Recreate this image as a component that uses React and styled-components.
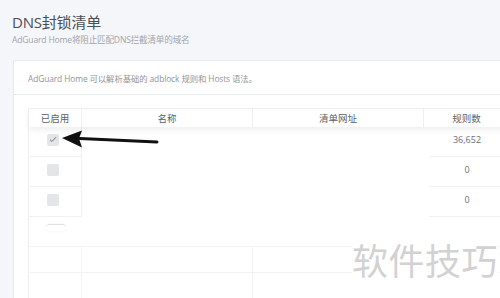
import React from "react";
import styled, { createGlobalStyle } from "styled-components";

const Global = createGlobalStyle`
  html, body { margin: 0; padding: 0; background: #f5f6fa; overflow: hidden; }
  body { font-family: "Open Sans", "Noto Sans CJK SC", sans-serif; width: 500px; height: 298px; }
`;

const Page = styled.div`
  position: relative;
  width: 500px;
  height: 298px;
  overflow: hidden;
  padding: 12px 0 0 12px;
  box-sizing: border-box;
`;

const Title = styled.h1`
  margin: 0;
  font-size: 15px;
  font-weight: 400;
  line-height: 20px;
  color: #4a4f57;
  letter-spacing: -0.2px;
`;

const Subtitle = styled.div`
  margin-top: 2px;
  font-size: 8.6px;
  line-height: 12px;
  color: #a0a5ab;
  letter-spacing: -0.2px;
`;

const Card = styled.div`
  margin-top: 14px;
  margin-left: 1px;
  width: 520px;
  background: #fff;
  border: 1px solid #e8eaef;
  border-right: none;
`;

const CardHeader = styled.div`
  height: 33px;
  display: flex;
  align-items: center;
  padding-left: 14px;
  font-size: 8.4px;
  color: #8f949a;
  border-bottom: 1px solid #e9ecef;
  letter-spacing: -0.1px;
`;

const CardBody = styled.div`
  padding: 13px 0 0 14px;
`;

const Table = styled.div`
  border-left: 1px solid #eef0f2;
  border-top: 1px solid #eef0f2;
`;

const cols = "53px 171px 171px 86px";

const HeadRow = styled.div`
  display: grid;
  grid-template-columns: ${cols};
  height: 18px;
  box-shadow: 0 3px 6px rgba(0, 0, 0, 0.07);
  position: relative;
  z-index: 1;
  background: #fff;
`;

const HeadCell = styled.div`
  display: flex;
  align-items: center;
  justify-content: center;
  font-size: 9.5px;
  color: #5a5f66;
  border-right: 1px solid #eef0f2;
`;

const Row = styled.div`
  display: grid;
  grid-template-columns: ${cols};
  height: 30px;
`;

const Cell = styled.div`
  display: flex;
  align-items: center;
  justify-content: center;
  font-size: 9px;
  color: #6a6f75;
  border-right: ${(p) => (p.$bordered ? "1px solid #f0f1f3" : "none")};
  border-bottom: ${(p) => (p.$lined ? "1px solid #f0f1f3" : "none")};
  box-sizing: border-box;
  margin-left: ${(p) => (p.$inset ? "5px" : "0")};
  padding-right: ${(p) => (p.$inset ? "5px" : "0")};
  padding-bottom: ${(p) => (p.$inset ? "4px" : "0")};
`;

const Box = styled.div`
  width: 12px;
  height: 12px;
  border-radius: 2px;
  background: #e4e5e7;
  display: flex;
  align-items: center;
  justify-content: center;
  margin: -4px 5px 0 0;
`;

const PadRow = styled.div`
  display: grid;
  grid-template-columns: 53px 171px 98px;
  height: ${(p) => p.$h}px;
  border-bottom: ${(p) => (p.$lined ? "1px solid #f2f3f5" : "none")};
  box-sizing: border-box;
`;

const PadCell = styled.div`
  border-right: ${(p) => (p.$bordered ? "1px solid #f2f3f5" : "none")};
  display: flex;
  justify-content: center;
`;

const Dash = styled.div`
  margin-top: 7px;
  width: 20px;
  height: 6px;
  border-radius: 4px;
  border-top: 1px solid #e0e0e0;
  box-shadow: 0 0 4px rgba(0, 0, 0, 0.04);
`;

const Arrow = styled.svg`
  position: absolute;
  left: 60px;
  top: 128px;
  width: 100px;
  height: 24px;
`;

const Watermark = styled.div`
  position: absolute;
  left: 352px;
  top: 235px;
  font-family: "Noto Sans CJK SC", sans-serif;
  font-size: 36px;
  color: #d2d2d2;
  letter-spacing: 0.5px;
  background: rgba(255, 255, 255, 0.9);
  line-height: 48px;
`;

const Check = () => (
  <svg width="8" height="7" viewBox="0 0 8 7">
    <path d="M1 3.6 L3 5.5 L7 1.2" fill="none" stroke="#6f737a" strokeWidth="1" />
  </svg>
);

const rows = [
  { on: true, rules: "36,652" },
  { on: false, rules: "0" },
  { on: false, rules: "0" },
];

export default function App() {
  return (
    <>
      <Global />
      <Page>
        <Title>DNS封锁清单</Title>
        <Subtitle>AdGuard Home将阻止匹配DNS拦截清单的域名</Subtitle>
        <Card>
          <CardHeader>AdGuard Home 可以解析基础的 adblock 规则和 Hosts 语法。</CardHeader>
          <CardBody>
            <Table>
              <HeadRow>
                <HeadCell>已启用</HeadCell>
                <HeadCell>名称</HeadCell>
                <HeadCell>清单网址</HeadCell>
                <HeadCell>规则数</HeadCell>
              </HeadRow>
              {rows.map((r, i) => (
                <Row key={i}>
                  <Cell $bordered $lined>
                    <Box>{r.on && <Check />}</Box>
                  </Cell>
                  <Cell />
                  <Cell />
                  <Cell $lined $inset>{r.rules}</Cell>
                </Row>
              ))}
              <PadRow $h={30} $lined>
                <PadCell>
                  <Dash />
                </PadCell>
                <PadCell />
                <PadCell />
              </PadRow>
              <PadRow $h={26} $lined>
                <PadCell $bordered />
                <PadCell $bordered />
                <PadCell />
              </PadRow>
              <PadRow $h={26}>
                <PadCell $bordered />
                <PadCell $bordered />
                <PadCell />
              </PadRow>
            </Table>
          </CardBody>
        </Card>
        <Arrow viewBox="0 0 100 24">
          <path d="M20 10.5 L97 14" stroke="#111" strokeWidth="3" strokeLinecap="round" fill="none" />
          <path d="M2 10 L22 2.5 L19 10.6 L22 19.5 Z" fill="#111" />
        </Arrow>
        <Watermark>软件技巧</Watermark>
      </Page>
    </>
  );
}
